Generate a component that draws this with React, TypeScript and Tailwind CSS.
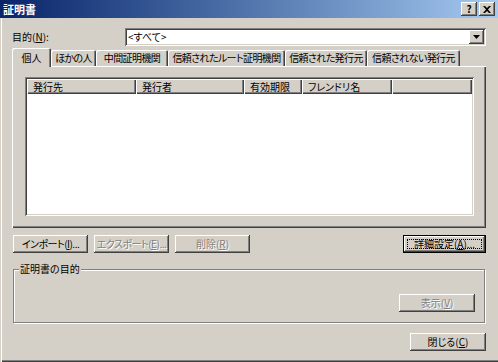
import React from "react";

const raised =
  "bg-[#d4d0c8] shadow-[inset_-1px_-1px_0_#404040,inset_1px_1px_0_#ffffff,inset_-2px_-2px_0_#808080,inset_2px_2px_0_#d4d0c8]";
const sunken =
  "shadow-[inset_1px_1px_0_#808080,inset_-1px_-1px_0_#ffffff,inset_2px_2px_0_#404040,inset_-2px_-2px_0_#d4d0c8]";
const headerCell =
  "bg-[#d4d0c8] shadow-[inset_1px_1px_0_#ffffff,inset_-1px_-1px_0_#404040,inset_-2px_-2px_0_#808080]";

function U({ children }: { children: React.ReactNode }) {
  return <span className="underline underline-offset-[1px]">{children}</span>;
}

function Btn({
  w,
  disabled,
  tight,
  children,
}: {
  w: string;
  disabled?: boolean;
  tight?: boolean;
  children: React.ReactNode;
}) {
  return (
    <div
      className={`${w} h-[18px] ${raised} flex items-center justify-center whitespace-nowrap overflow-hidden ${
        tight ? "tracking-[-0.5px]" : ""
      } ${
        disabled
          ? "text-[#808080] [text-shadow:1px_1px_0_#ffffff]"
          : "text-black"
      }`}
    >
      {children}
    </div>
  );
}

function Tab({ w, children }: { w: string; children: React.ReactNode }) {
  return (
    <div
      className={`${w} h-[16px] shrink-0 flex items-center justify-center whitespace-nowrap overflow-hidden tracking-[-0.6px] rounded-t-[2px] bg-[#d4d0c8] shadow-[inset_1px_1px_0_#ffffff,inset_-1px_0_0_#404040,inset_-2px_0_0_#808080]`}
    >
      {children}
    </div>
  );
}

export default function App() {
  return (
    <div
      className="w-[498px] h-[362px] bg-[#d4d0c8] flex flex-col overflow-hidden text-[10px] leading-none text-black whitespace-nowrap [font-feature-settings:'palt']"
      style={{ fontFamily: "'Noto Sans CJK JP', 'Noto Sans', sans-serif" }}
    >
      {/* Title bar */}
      <div className="h-[18px] shrink-0 bg-linear-to-r from-[#0a246a] to-[#a6caf0] flex items-center pl-[3px] pr-[3px]">
        <span className="text-white font-bold text-[11px]">証明書</span>
        <div className="ml-auto flex items-center gap-[2px]">
          <div
            className={`w-[16px] h-[14px] ${raised} flex items-center justify-center text-[10px] font-bold`}
          >
            ?
          </div>
          <div
            className={`w-[16px] h-[14px] ${raised} flex items-center justify-center`}
          >
            <svg width="8" height="7" viewBox="0 0 8 7">
              <path
                d="M0 0h2l2 2 2-2h2L5 3.5 8 7H6L4 5 2 7H0l3-3.5z"
                fill="#000"
              />
            </svg>
          </div>
        </div>
      </div>

      {/* Body */}
      <div className="flex-1 flex flex-col pl-[12px] shadow-[inset_1px_0_0_#d4d0c8,inset_2px_0_0_#ffffff,inset_0_-1px_0_#404040,inset_0_-2px_0_#808080]">
        {/* Purpose row */}
        <div className="mt-[10px] h-[18px] flex items-center">
          <div className="w-[113px]">
            目的(<U>N</U>):
          </div>
          <div
            className={`w-[361px] h-[18px] bg-white ${sunken} flex items-center pl-[3px] pr-[2px]`}
          >
            <span>&lt;すべて&gt;</span>
            <div
              className={`ml-auto w-[15px] h-[14px] ${raised} flex items-center justify-center`}
            >
              <svg width="7" height="4" viewBox="0 0 7 4">
                <path d="M0 0h7L3.5 4z" fill="#000" />
              </svg>
            </div>
          </div>
        </div>

        {/* Tabs */}
        <div className="mt-[2px] h-[18px] flex items-end">
          <div className="w-[39px] h-[19px] -mb-[1px] shrink-0 relative z-10 flex items-center justify-center rounded-t-[2px] bg-[#d4d0c8] shadow-[inset_1px_1px_0_#ffffff,inset_-1px_0_0_#404040,inset_-2px_0_0_#808080]">
            個人
          </div>
          <Tab w="w-[45px]">ほかの人</Tab>
          <Tab w="w-[72px]">中間証明機関</Tab>
          <Tab w="w-[117px]">信頼されたルート証明機関</Tab>
          <Tab w="w-[82px]">信頼された発行元</Tab>
          <Tab w="w-[93px]">信頼されない発行元</Tab>
        </div>

        {/* Tab panel */}
        <div className="w-[474px] h-[162px] pt-[11px] pl-[13px] bg-[#d4d0c8] shadow-[inset_1px_1px_0_#ffffff,inset_-1px_-1px_0_#404040,inset_-2px_-2px_0_#808080]">
          <div className={`w-[449px] h-[139px] bg-white ${sunken} p-[2px]`}>
            <div className="flex h-[15px]">
              <div className={`w-[109px] ${headerCell} flex items-center pl-[6px]`}>
                発行先
              </div>
              <div className={`w-[108px] ${headerCell} flex items-center pl-[6px]`}>
                発行者
              </div>
              <div className={`w-[58px] ${headerCell} flex items-center pl-[6px]`}>
                有効期限
              </div>
              <div className={`w-[90px] ${headerCell} flex items-center pl-[6px]`}>
                フレンドリ名
              </div>
              <div className={`w-[80px] ${headerCell}`} />
            </div>
          </div>
        </div>

        {/* Buttons row */}
        <div className="mt-[7px] ml-[1px] w-[473px] h-[18px] flex">
          <div className="flex gap-[6px]">
            <Btn w="w-[75px]" tight>
              インポート(<U>I</U>)...
            </Btn>
            <Btn w="w-[75px]" disabled tight>
              エクスポート(<U>E</U>)...
            </Btn>
            <Btn w="w-[75px]" disabled>
              削除(<U>R</U>)
            </Btn>
          </div>
          <div className="ml-auto w-[83px] h-[18px] border border-black bg-[#d4d0c8]">
            <div className={`w-full h-full ${raised} p-[3px]`}>
              <div className="w-full h-full border border-dotted border-black flex items-center justify-center">
                詳細設定(<U>A</U>)...
              </div>
            </div>
          </div>
        </div>

        {/* Group box */}
        <div className="mt-[16px] ml-[1px] w-[472px] h-[54px] relative border border-[#808080] shadow-[1px_1px_0_#ffffff,inset_1px_1px_0_#ffffff] flex justify-end items-start pt-[24px] pr-[9px]">
          <span className="absolute left-[5px] -top-[6px] px-[1px] bg-[#d4d0c8]">
            証明書の目的
          </span>
          <Btn w="w-[76px]" disabled>
            表示(<U>V</U>)
          </Btn>
        </div>

        {/* Close */}
        <div className="mt-[10px] ml-[398px]">
          <Btn w="w-[76px]">
            閉じる(<U>C</U>)
          </Btn>
        </div>
      </div>
    </div>
  );
}
